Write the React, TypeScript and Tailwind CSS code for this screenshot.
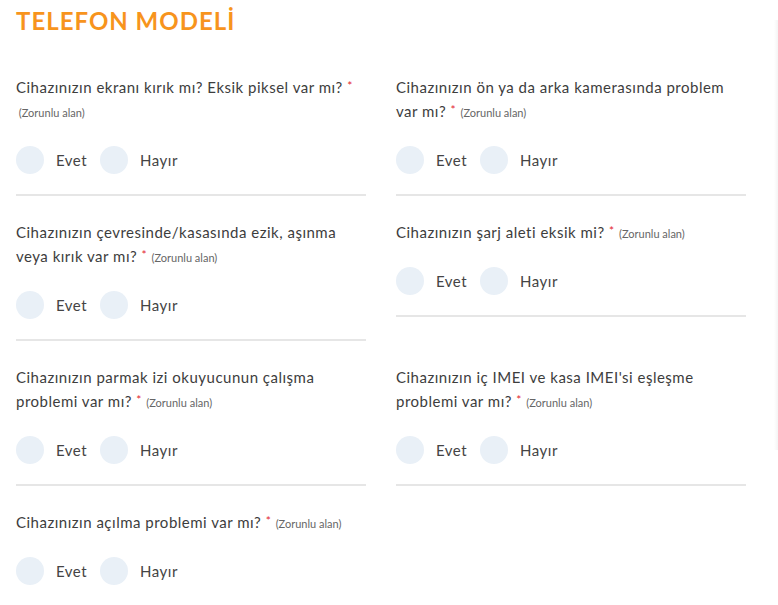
import React from 'react'

interface Question {
  text: string
  // "(Zorunlu alan)" goes on its own line
  noteBreak?: boolean
}

const LEFT: Question[] = [
  { text: 'Cihazınızın ekranı kırık mı? Eksik piksel var mı?', noteBreak: true },
  { text: 'Cihazınızın çevresinde/kasasında ezik, aşınma veya kırık var mı?' },
  { text: 'Cihazınızın parmak izi okuyucunun çalışma problemi var mı?' },
  { text: 'Cihazınızın açılma problemi var mı?' },
]

const RIGHT: Question[] = [
  { text: 'Cihazınızın ön ya da arka kamerasında problem var mı?' },
  { text: 'Cihazınızın şarj aleti eksik mi?' },
  { text: 'Cihazınızın iç IMEI ve kasa IMEI\'si eşleşme problemi var mı?' },
]

function Radio({ label }: { label: string }) {
  return (
    <label className="flex items-center cursor-pointer">
      <span className="w-7 h-7 rounded-full bg-[#e9f0f7] shrink-0" />
      <span className="ml-3 text-[15px] leading-6 tracking-[0.5px] text-[#444]">{label}</span>
    </label>
  )
}

function QuestionCell({ q, last }: { q: Question; last?: boolean }) {
  return (
    <div className={last ? '' : 'pb-5 border-b-2 border-[#e6e6e6]'}>
      <div className="text-[15px] leading-6 tracking-[0.5px] text-[#3d3d3d]">
        {q.text} <span className="text-[#e3262f] text-[12px] leading-none align-[3px]">*</span>
        {q.noteBreak ? <br /> : ' '}
        <span className="text-[11px] leading-none tracking-normal text-[#666]">{q.noteBreak ? '\u00a0' : ''}(Zorunlu alan)</span>
      </div>
      <div className="flex items-center gap-[13px] mt-[23px]">
        <Radio label="Evet" />
        <Radio label="Hayır" />
      </div>
    </div>
  )
}

export default function App() {
  const rows = Math.max(LEFT.length, RIGHT.length)
  return (
    <div className="relative w-[778px] h-[605px] bg-white overflow-hidden" style={{ fontFamily: 'Lato, "Noto Sans", sans-serif' }}>
      {/* faint shadow of the neighbouring card */}
      <div className="absolute right-0 top-[20px] w-[4px] h-[430px] bg-gradient-to-l from-[#f4f4f4] to-white" />

      <div className="px-4 pt-[5px]">
        <h2 className="text-[24px] font-bold tracking-[1px] text-[#f7941d] leading-8">TELEFON MODELİ</h2>

        <div className="grid grid-cols-[350px_350px] gap-x-[30px] gap-y-6 mt-[38px] items-start">
          {Array.from({ length: rows }).map((_, i) => (
            <React.Fragment key={i}>
              {LEFT[i] ? <QuestionCell q={LEFT[i]} last={i === LEFT.length - 1} /> : <div />}
              {RIGHT[i] ? <QuestionCell q={RIGHT[i]} /> : <div />}
            </React.Fragment>
          ))}
        </div>
      </div>
    </div>
  )
}
